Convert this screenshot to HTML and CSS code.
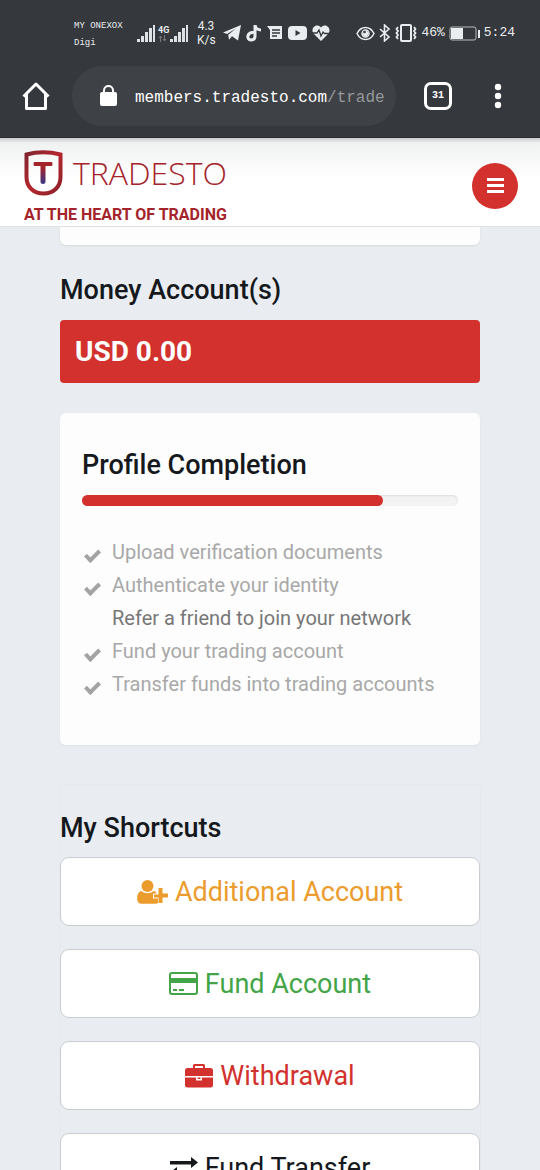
FILE: index.html
```html
<!DOCTYPE html>
<html lang="en">
<head>
<meta charset="utf-8">
<meta name="viewport" content="width=device-width, initial-scale=1">
<title>Tradesto</title>
<link rel="stylesheet" href="styles.css">
</head>
<body>
<div class="browser">
  <div class="status">
    <div class="carrier"><span>MY ONEXOX</span><span>Digi</span></div>
    <div class="signals">
      <svg width="19" height="18" viewBox="0 0 19 18" fill="#dde1e3"><path d="M0 15h3v3H0zM4 12h3v6H4zM8 8h3v10H8zM12 4h3v14h-3zM16 1h2v17h-2z"/></svg>
      <div class="net"><span>4G</span><svg width="9" height="7" viewBox="0 0 9 7" fill="none" stroke="#74787b"><path d="M2.500 7V1M1 3l1.500-2L4 3M6.500 0v6M5 4l1.500 2L8 4"/></svg></div>
      <svg width="19" height="18" viewBox="0 0 19 18" fill="#dde1e3"><path d="M0 15h3v3H0zM4 12h3v6H4zM8 8h3v10H8zM12 4h3v14h-3zM16 1h2v17h-2z"/></svg>
    </div>
    <div class="speed"><span>4.3</span><span>K/s</span></div>
    <div class="apps">
      <svg width="18" height="16" viewBox="0 0 18 16" fill="#e9edef"><path d="M0 7.500 18 0l-3 15.500-6-4.300-3 3.500-.8-5L13 3.500 4 9z"/></svg>
      <svg width="16" height="17" viewBox="0 0 16 17" fill="none" stroke="#e9edef" stroke-width="3"><path d="M7.500 7.500C1 7 0 14.500 5 15c3 0 4-2 4-4V0c.5 3 2.500 5 6 5"/></svg>
      <svg width="16" height="15" viewBox="0 0 16 15"><path fill="#e9edef" d="M0 0h15v13H3V4z"/><path stroke="#35383c" stroke-width="1.500" d="M5 4h8M5 7h8M5 10h5"/></svg>
      <svg width="19" height="14" viewBox="0 0 19 14"><rect width="19" height="14" rx="4" fill="#e9edef"/><path d="M7.500 4v6l5-3z" fill="#35383c"/></svg>
      <svg width="18" height="16" viewBox="0 0 18 16"><path fill="#e9edef" d="M9 16 1.500 8.500C-2 4 4-3 9 2.500c5-5.500 11 1.500 7.500 6z"/><path fill="none" stroke="#35383c" stroke-width="1.300" d="M0 8h5l2-3 2 6 2-4 1.500 1.500H18"/></svg>
    </div>
    <div class="system">
      <svg width="19" height="15" viewBox="0 0 19 15" fill="none" stroke="#e9edef" stroke-width="1.500"><path d="M1 7.500C5-.5 14-.5 18 7.500 14 15.500 5 15.500 1 7.500z"/><circle cx="9.500" cy="7.500" r="3.500"/><circle cx="9.500" cy="7.500" r="2" fill="#e9edef"/><circle cx="8.500" cy="6" r=".6" stroke="#35383c"/></svg>
      <svg width="12" height="18" viewBox="0 0 12 18" fill="none" stroke="#e9edef" stroke-width="1.600"><path d="m1 5 9 8-4.500 4V1L10 5l-9 8"/></svg>
      <svg width="22" height="18" viewBox="0 0 22 18" fill="none" stroke="#e9edef" stroke-width="2"><rect x="6" y="1" width="10" height="16" rx="1"/><path stroke-width="1.800" d="m3 3-1.500 2L3 7 1.500 9 3 11l-1.500 2L3 15M19 3l1.500 2L19 7l1.500 2-1.500 2 1.500 2-1.500 2"/></svg>
      <span class="mono">46%</span>
      <svg width="31" height="15" viewBox="0 0 31 15"><rect x="1" y="1" width="26" height="13" rx="2" fill="none" stroke="#b8bcbe"/><path fill="#e9edef" d="M2 2h12v11H2zM29 4h2v8h-2z"/></svg>
      <span class="mono">5:24</span>
    </div>
  </div>
  <div class="toolbar">
    <button class="tool" aria-label="Home"><svg width="28" height="28" viewBox="0 0 28 28" fill="none" stroke="#fff" stroke-width="3" stroke-linejoin="round"><path d="M1.500 14.500 14 2l12.500 12.500M4.500 12v14.500h19V12"/></svg></button>
    <div class="omnibox">
      <svg width="17" height="22" viewBox="0 0 17 22"><rect y="7" width="17" height="14" rx="2" fill="#fff"/><path d="M4 8V5.500c0-6 9-6 9 0V8" fill="none" stroke="#fff" stroke-width="2"/></svg>
      <div class="url">members.tradesto.com<span class="path">/trade</span></div>
    </div>
    <button class="tabs" aria-label="Tabs">31</button>
    <button class="tool" aria-label="More"><svg width="8" height="26" viewBox="0 0 8 26" fill="#fff"><circle cx="4" cy="4" r="3.200"/><circle cx="4" cy="13" r="3.200"/><circle cx="4" cy="22" r="3.200"/></svg></button>
  </div>
</div>

<header class="site-header">
  <a class="brand" href="#">
    <span class="brand-row">
      <svg width="39" height="46" viewBox="0 0 39 46"><defs><linearGradient id="t" x1="0" y1="0" x2="0" y2="1"><stop offset=".25" stop-color="#a3242b"/><stop offset="1" stop-color="#38368a"/></linearGradient><linearGradient id="s" x1="0" y1="0" x2="1" y2="1"><stop offset="0" stop-color="#812530"/><stop offset=".5" stop-color="#b5262d"/><stop offset="1" stop-color="#8c222b"/></linearGradient></defs><path d="M2.500 4.500Q19 0 36.500 4.500V27c0 10-7 16.500-17 16.500S2.500 37 2.500 27z" fill="none" stroke="url(#s)" stroke-width="4"/><path d="M10.500 12h17q1 0 1 2t-1 2h-6v16q0 2-2.500 2t-2.500-2V16h-6q-1 0-1-2t1-2z" fill="url(#t)"/></svg>
      <span class="name">TRADESTO</span>
    </span>
    <span class="tagline">AT THE HEART OF TRADING</span>
  </a>
  <button class="menu" aria-label="Menu"><svg width="17" height="15" viewBox="0 0 17 15" fill="#fff"><path d="M0 0h17v3H0zM0 6h17v3H0zM0 12h17v3H0z"/></svg></button>
</header>

<main class="content">
  <div class="prev-card"></div>
  <h2 class="title">Money Account(s)</h2>
  <div class="balance">USD 0.00</div>

  <section class="profile">
    <h2 class="title">Profile Completion</h2>
    <div class="bar" role="progressbar" aria-label="Profile completion" aria-valuenow="80" aria-valuemin="0" aria-valuemax="100"><div class="fill" style="width:80%"></div></div>
    <ul class="steps">
      <li class="done">Upload verification documents</li>
      <li class="done">Authenticate your identity</li>
      <li>Refer a friend to join your network</li>
      <li class="done">Fund your trading account</li>
      <li class="done">Transfer funds into trading accounts</li>
    </ul>
  </section>

  <section class="shortcuts">
    <h2 class="title">My Shortcuts</h2>
    <div class="buttons">
      <button class="shortcut orange"><svg width="31" height="24" viewBox="0 0 31 24" fill="currentColor"><circle cx="10.500" cy="6" r="6"/><path d="M4.500 11c3.500 3 8.500 3 12 0 1.500.2 2.500 1 3.300 2.500h-3.800v5h5V23c-.8.500-1.500.7-2.500.7H4c-5.500 0-5-12 .5-12.700zM21.500 8h4v5.500H31v4h-5.500V23h-4v-5.500H17v-3h4.500z"/></svg>Additional Account</button>
      <button class="shortcut green"><svg width="29" height="23" viewBox="0 0 29 23"><rect x="1" y="1" width="27" height="21" rx="2" fill="none" stroke="currentColor" stroke-width="2"/><path fill="currentColor" d="M1 6h27v5H1zM4 17h4v2H4zM10 17h5v2h-5z"/></svg>Fund Account</button>
      <button class="shortcut red"><svg width="28" height="24" viewBox="0 0 28 24" fill="currentColor"><path fill-rule="evenodd" d="M8 4V1.500Q8 0 9.500 0h9Q20 0 20 1.500V4h5.500Q28 4 28 6.500V12H0V6.500Q0 4 2.500 4zm2 0h8V2h-8zM0 13.500h11v3h6v-3h11v7.500q0 2.500-2.500 2.500h-23Q0 23.500 0 21zM12.500 13.500h3v1.500h-3z"/></svg>Withdrawal</button>
      <button class="shortcut black"><svg width="28" height="22" viewBox="0 0 28 22" fill="currentColor"><path d="M0 4h21V0l7 5.500-7 5.500V7.500H0zM28 14H7v-4l-7 5.500L7 21v-3.500h21z"/></svg>Fund Transfer</button>
    </div>
  </section>
</main>
</body>
</html>
```
FILE: styles.css
```css
*, *::before { box-sizing: border-box; }

body {
  margin: 0;
  height: 100vh;
  overflow: hidden;
  background: #e9edf1;
  color: #15181c;
  font-family: Roboto, sans-serif;
}

button { padding: 0; border: 0; background: none; font-family: inherit; }
svg { display: block; flex: none; }

/* Browser chrome */
.browser { background: #35383c; color: #e9edef; border-bottom: 1px solid #2b2e30; }

.status {
  display: flex;
  align-items: center;
  height: 66px;
  padding: 0 25px 0 74px;
}
.carrier, .speed { display: flex; flex-direction: column; }
.carrier { width: 63px; padding-top: 4px; font: 9px/17px "Liberation Mono", monospace; white-space: nowrap; }
.signals { display: flex; align-items: center; gap: 2px; width: 60px; }
.net { width: 10px; font: bold 9px/10px Roboto, sans-serif; }
.speed { width: 26px; font-size: 12px; line-height: 14px; align-items: flex-start; padding-right: 8px; }
.speed span:first-child { align-self: center; }
.apps { display: flex; align-items: center; gap: 5px; }
.system { display: flex; align-items: center; gap: 4px; margin-left: auto; }
.mono { font: 13px/18px "Liberation Mono", monospace; }

.toolbar {
  display: flex;
  align-items: center;
  padding: 0 38px 11px 22px;
}
.omnibox {
  display: flex;
  flex: 1;
  align-items: center;
  gap: 18px;
  min-width: 0;
  height: 60px;
  margin: 0 28px 0 22px;
  padding: 0 12px 0 28px;
  border-radius: 30px;
  background: #3e4145;
}
.url { flex: 1; padding-top: 4px; overflow: hidden; white-space: nowrap; color: #fff; font: 16px/24px "Liberation Mono", monospace; }
.path { color: #94989b; }
.tabs {
  width: 28px;
  height: 28px;
  margin-right: 42px;
  border: 3px solid #fff;
  border-radius: 7px;
  color: #fff;
  font: bold 10px/20px "Liberation Mono", monospace;
}

/* Site header */
.site-header {
  display: flex;
  align-items: center;
  justify-content: space-between;
  height: 89px;
  padding: 7px 22px 0 24px;
  background: linear-gradient(#c9cdcc, #f0f1f1 5px, #fff 40px);
  border-bottom: 1px solid #dfe3e5;
}
.brand { display: flex; flex-direction: column; gap: 9px; padding-top: 3px; color: #a5232a; text-decoration: none; }
.brand-row { display: flex; align-items: center; gap: 10px; }
.name { font: 300 32px/40px "Open Sans", sans-serif; }
.tagline { font: bold 16px/20px Roboto, sans-serif; }
.menu {
  display: grid;
  place-items: center;
  width: 46px;
  height: 46px;
  border-radius: 50%;
  background: #d2312d;
}

/* Dashboard */
.content { padding: 0 60px; }
.title { margin: 0; font-size: 27px; line-height: 32px; font-weight: 500; }
.prev-card {
  height: 18px;
  margin-bottom: 29px;
  border-radius: 0 0 6px 6px;
  background: #fdfdfd;
  box-shadow: 0 1px 2px #d5dade;
}
.balance {
  margin: 14px 0 30px;
  padding: 15px;
  border-radius: 4px;
  background: #d2312d;
  color: #fff;
  font-size: 28px;
  line-height: 33px;
  font-weight: 700;
}
.profile {
  padding: 36px 22px 44px;
  border-radius: 6px;
  background: #fdfdfd;
  box-shadow: 0 1px 2px #dce1e5;
}
.bar {
  height: 11px;
  margin: 14px 0 30px;
  border-radius: 6px;
  background: #f3f3f3;
  box-shadow: inset 0 1px 2px #dcdcdc;
}
.fill { height: 100%; border-radius: 6px; background: #d2312d; }
.steps { margin: 0; padding: 0; list-style: none; }
.steps li { position: relative; padding-left: 30px; color: #777; font-size: 20px; line-height: 33px; }
.steps .done { color: #a8a8a8; }
.steps .done::before {
  content: "";
  position: absolute;
  top: 14px;
  left: 3px;
  width: 15px;
  height: 9px;
  border: solid #a3a3a3;
  border-width: 0 0 4px 4px;
  transform: rotate(-45deg);
}

.shortcuts { margin-top: 40px; padding-top: 27px; box-shadow: 0 0 1px #d9dde2; }
.buttons { display: grid; gap: 23px; margin-top: 13px; }
.shortcut {
  display: flex;
  align-items: center;
  justify-content: center;
  gap: 7px;
  height: 69px;
  border: 1px solid #c9ccd0;
  border-radius: 9px;
  background: #fff;
  font-size: 27px;
  line-height: 32px;
}
.orange { color: #eb9c2d; }
.green { color: #43a547; }
.red { color: #d2312d; }
.black { color: #15181c; }
```
